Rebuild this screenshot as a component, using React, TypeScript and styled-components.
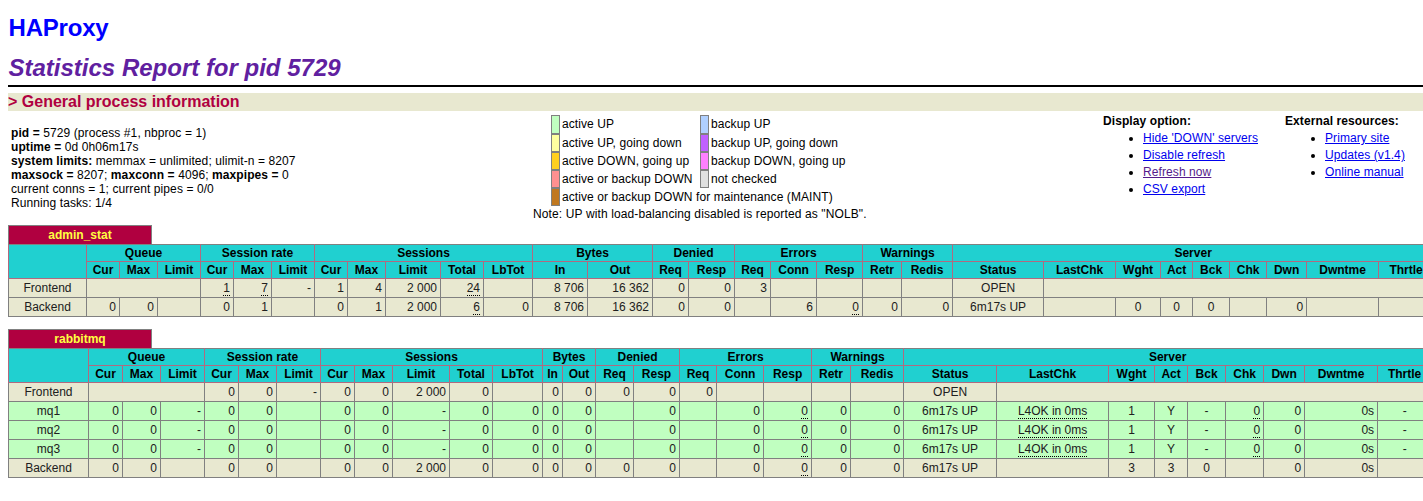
import React from "react";
import styled, { createGlobalStyle } from "styled-components";

const Global = createGlobalStyle`
  html, body { margin: 0; padding: 0; background: #fff; overflow: hidden; }
  body { font: 12px "Liberation Sans", Arial, sans-serif; color: #000; }
`;

const Page = styled.div`
  width: 1440px;
  height: 501px;
  margin-left: 8px;
  overflow: hidden;
`;

const Brand = styled.h1`
  margin: 0;
  padding: 14px 0 0 0.5px;
  height: 41px;
  font-size: 24px;
  line-height: 28px;
  font-weight: bold;
  letter-spacing: -0.2px;
  color: #0000ff;
`;

const Report = styled.h2`
  margin: 0;
  padding-left: 0.5px;
  height: 30px;
  font-size: 24px;
  line-height: 26px;
  font-weight: bold;
  font-style: italic;
  color: #6020a0;
`;

const Rule = styled.hr`
  margin: 0 0 6px;
  height: 2px;
  border: 0;
  background: #000;
`;

const Section = styled.h3`
  margin: 0;
  height: 18px;
  font-size: 16px;
  line-height: 18px;
  font-weight: bold;
  color: #b00040;
  background: #e8e8d0;
`;

const Info = styled.div`
  position: relative;
  height: 114px;
  letter-spacing: 0.09px;
`;

const Process = styled.div`
  position: absolute;
  left: 3px;
  top: 15px;
  line-height: 14px;
`;

const Legend = styled.div`
  position: absolute;
  left: 525px;
  top: 4px;
`;

const LegendGrid = styled.div`
  display: grid;
  grid-template-columns: 149px auto;
  margin-left: 18px;
`;

const LegendItem = styled.div<{ $tall?: boolean; $span?: boolean }>`
  display: flex;
  height: ${(p) => (p.$tall ? 19 : 18)}px;
  line-height: ${(p) => (p.$tall ? 19 : 18)}px;
  ${(p) => (p.$span ? "grid-column: 1 / 3;" : "")}
  white-space: nowrap;
`;

const Swatch = styled.span<{ $color: string }>`
  box-sizing: border-box;
  flex: none;
  width: 9px;
  height: 100%;
  margin-right: 2px;
  background: ${(p) => p.$color};
  border: 1px solid #808080;
`;

const Note = styled.div`
  margin-top: 1px;
  white-space: nowrap;
  letter-spacing: 0.12px;
`;

const Options = styled.div<{ $left: number }>`
  position: absolute;
  left: ${(p) => p.$left}px;
  top: 3px;
  white-space: nowrap;
`;

const OptionsTitle = styled.b`
  display: block;
  line-height: 14px;
  margin-bottom: 2px;
`;

const OptionsList = styled.ul`
  margin: 0;
  padding: 0 0 0 40px;
  line-height: 17px;
`;

const OptionLink = styled.a<{ $visited?: boolean }>`
  color: ${(p) => (p.$visited ? "#551a8b" : "#0000ee")};
  text-decoration: underline;
`;

const Proxy = styled.div<{ $gap: number }>`
  margin-bottom: ${(p) => p.$gap}px;
`;

const ProxyTitle = styled.div`
  box-sizing: border-box;
  width: 144px;
  height: 19px;
  line-height: 18px;
  text-align: center;
  font-weight: bold;
  color: #ffff40;
  background: #b00040;
  border: 1px solid #808080;
  border-bottom: 0;
`;

const Table = styled.table`
  table-layout: fixed;
  border-collapse: collapse;
  font-size: 12px;
`;

const Head = styled.th`
  height: 16px;
  padding: 0;
  font-weight: bold;
  text-align: center;
  color: #000;
  background: #20d0d0;
  border: 1px solid #b06a80;
  line-height: 15px;
  white-space: nowrap;
  overflow: visible;
`;

const TopRow = styled.tr`
  & > th { border-top-color: #808080; }
`;

const Row = styled.tr<{ $up?: boolean }>`
  height: 19px;
  background: ${(p) => (p.$up ? "#c0ffc0" : "#e8e8d0")};
  color: #202020;
`;

const Cell = styled.td<{ $align?: string }>`
  padding: 0 3px;
  height: 18px;
  text-align: ${(p) => p.$align || "right"};
  border: 1px solid #808080;
  white-space: nowrap;
  line-height: 15px;
`;

const Hint = styled.span`
  border-bottom: 1px dotted #000;
`;

const Subs = [
  "Cur","Max","Limit","Cur","Max","Limit","Cur","Max","Limit","Total","LbTot","In","Out","Req","Resp","Req","Conn","Resp","Retr","Redis","Status","LastChk","Wght","Act","Bck","Chk","Dwn","Dwntme","Thrtle",
];
const Groups: [string, number][] = [
  ["Queue",3],["Session rate",3],["Sessions",5],["Bytes",2],["Denied",2],["Errors",3],["Warnings",2],["Server",9],
];

type Val = string | [string, "h"];
type RowData = { name: string; up?: boolean; cells: (Val | { span: number; v?: string; align?: string })[] };

const h = (v: string): Val => [v, "h"];
const span = (n: number, v?: string, align?: string) => ({ span: n, v, align });

const alignFor = (col: number) => {
  const name = Subs[col];
  return col >= 20 && name !== "Chk" && name !== "Dwn" && name !== "Dwntme" ? "center" : "right";
};

const Stat: React.FC<{ title: string; edges: number[]; rows: RowData[]; gap: number }> = ({ title, edges, rows, gap }) => {
  const widths = edges.slice(1).map((e, i) => e - edges[i]);
  const total = edges[edges.length - 1] - edges[0];
  return (
    <Proxy $gap={gap}>
      <ProxyTitle>{title}</ProxyTitle>
      <Table style={{ width: total }}>
        <colgroup>
          {widths.map((w, i) => <col key={i} style={{ width: w }} />)}
        </colgroup>
        <thead>
          <TopRow>
            <Head rowSpan={2} />
            {Groups.map(([g, n]) => <Head key={g} colSpan={n}>{g}</Head>)}
          </TopRow>
          <tr>
            {Subs.map((s, i) => <Head key={i}>{s}</Head>)}
          </tr>
        </thead>
        <tbody>
          {rows.map((r) => {
            let col = 0;
            return (
              <Row key={r.name} $up={r.up}>
                <Cell $align="center">{r.name}</Cell>
                {r.cells.map((c, i) => {
                  if (Array.isArray(c)) {
                    const a = alignFor(col);
                    col += 1;
                    return <Cell key={i} $align={a}><Hint>{c[0]}</Hint></Cell>;
                  }
                  if (typeof c === "object") {
                    const o = c as { span: number; v?: string; align?: string };
                    col += o.span;
                    return <Cell key={i} colSpan={o.span} $align={o.align}>{o.v}</Cell>;
                  }
                  const a = alignFor(col);
                  col += 1;
                  return <Cell key={i} $align={a}>{c as string}</Cell>;
                })}
              </Row>
            );
          })}
        </tbody>
      </Table>
    </Proxy>
  );
};

const edgesA = [8,86,119,157,200,233,271,314,347,385,440,483,532,587,652,688,734,770,816,862,901,952,1043,1115,1160,1192,1229,1266,1306,1378,1433];
const edgesB = [8,88,122,160,204,238,276,320,354,392,449,492,542,562,595,633,679,716,763,811,850,903,996,1108,1154,1187,1225,1263,1304,1377,1431];

const adminRows: RowData[] = [
  { name: "Frontend", cells: [span(3), h("1"), h("7"), "-", "1", "4", "2 000", h("24"), "", "8 706", "16 362", "0", "0", "3", "", "", "", "", "OPEN", span(8)] },
  { name: "Backend", cells: ["0", "0", "", "0", "1", "", "0", "1", "2 000", h("6"), "0", "8 706", "16 362", "0", "0", "", "6", h("0"), "0", "0", "6m17s UP", "", "0", "0", "0", "", "0", "", ""] },
];

const mq = (name: string): RowData => ({
  name, up: true,
  cells: ["0", "0", "-", "0", "0", "", "0", "0", "-", "0", "0", "0", "0", "", "0", "", "0", h("0"), "0", "0", "6m17s UP", h("L4OK in 0ms"), "1", "Y", "-", h("0"), "0", "0s", "-"],
});

const rabbitRows: RowData[] = [
  { name: "Frontend", cells: [span(3), "0", "0", "-", "0", "0", "2 000", "0", "", "0", "0", "0", "0", "0", "", "", "", "", "OPEN", span(8)] },
  mq("mq1"), mq("mq2"), mq("mq3"),
  { name: "Backend", cells: ["0", "0", "", "0", "0", "", "0", "0", "2 000", "0", "0", "0", "0", "0", "0", "", "0", h("0"), "0", "0", "6m17s UP", "", "3", "3", "0", "", "0", "0s", ""] },
];

const legendCols: [string, string, boolean?][] = [
  ["#c0ffc0", "active UP", true], ["#b0d0ff", "backup UP", true],
  ["#ffffa0", "active UP, going down"], ["#c060ff", "backup UP, going down"],
  ["#ffd020", "active DOWN, going up"], ["#ff80ff", "backup DOWN, going up"],
  ["#ff9090", "active or backup DOWN"], ["#e0e0e0", "not checked"],
];

export default function App() {
  return (
    <Page>
      <Global />
      <Brand>HAProxy</Brand>
      <Report>Statistics Report for pid 5729</Report>
      <Rule />
      <Section>&gt; General process information</Section>
      <Info>
        <Process>
          <b>pid = </b>5729 (process #1, nbproc = 1)<br />
          <b>uptime = </b>0d 0h06m17s<br />
          <b>system limits:</b> memmax = unlimited; ulimit-n = 8207<br />
          <b>maxsock = </b>8207; <b>maxconn = </b>4096; <b>maxpipes = </b>0<br />
          current conns = 1; current pipes = 0/0<br />
          Running tasks: 1/4
        </Process>
        <Legend>
          <LegendGrid>
            {legendCols.map(([c, t, tall]) => (
              <LegendItem key={t} $tall={tall}><Swatch $color={c} />{t}</LegendItem>
            ))}
            <LegendItem $span><Swatch $color="#c07820" />active or backup DOWN for maintenance (MAINT)</LegendItem>
          </LegendGrid>
          <Note>Note: UP with load-balancing disabled is reported as "NOLB".</Note>
        </Legend>
        <Options $left={1095}>
          <OptionsTitle>Display option:</OptionsTitle>
          <OptionsList>
            <li><OptionLink href="#">Hide 'DOWN' servers</OptionLink></li>
            <li><OptionLink href="#">Disable refresh</OptionLink></li>
            <li><OptionLink href="#" $visited>Refresh now</OptionLink></li>
            <li><OptionLink href="#">CSV export</OptionLink></li>
          </OptionsList>
        </Options>
        <Options $left={1277}>
          <OptionsTitle>External resources:</OptionsTitle>
          <OptionsList>
            <li><OptionLink href="#">Primary site</OptionLink></li>
            <li><OptionLink href="#">Updates (v1.4)</OptionLink></li>
            <li><OptionLink href="#">Online manual</OptionLink></li>
          </OptionsList>
        </Options>
      </Info>
      <Stat title="admin_stat" edges={edgesA} rows={adminRows} gap={12} />
      <Stat title="rabbitmq" edges={edgesB} rows={rabbitRows} gap={0} />
    </Page>
  );
}
